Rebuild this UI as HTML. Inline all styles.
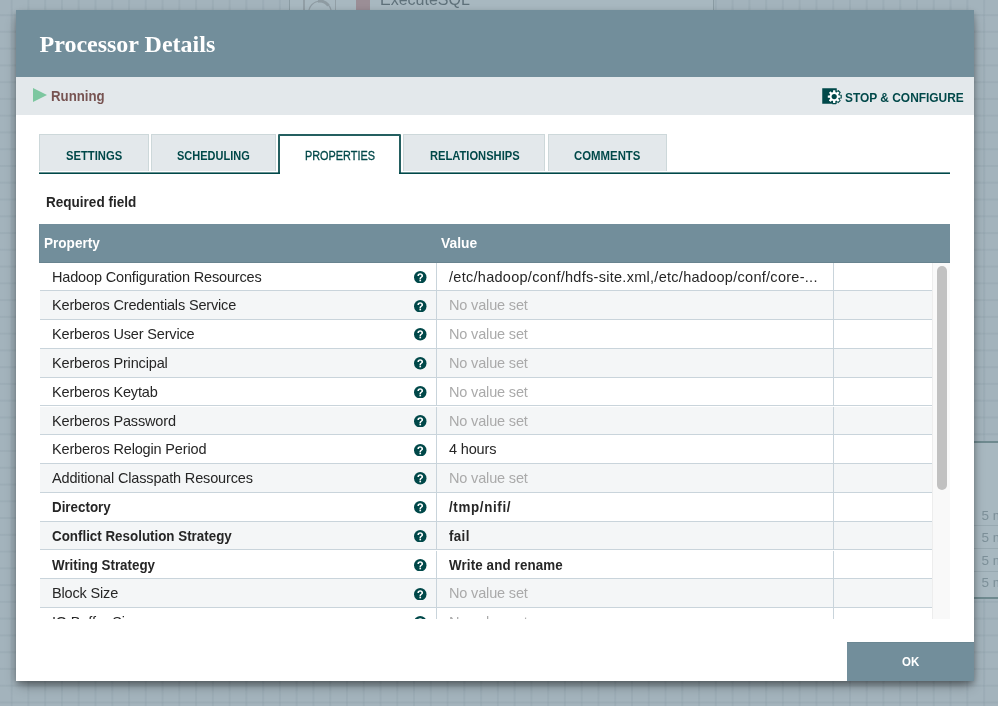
<!DOCTYPE html>
<html><head><meta charset="utf-8">
<style>
html,body{margin:0;padding:0;}
body{width:998px;height:706px;position:relative;overflow:hidden;background-color:#a3b3bc;font-family:"Liberation Sans",sans-serif;}
.t{position:absolute;white-space:nowrap;line-height:normal;}
#grid-bg{position:absolute;left:0;top:0;width:998px;height:706px;
background-image:linear-gradient(to right, rgba(125,145,155,0.17) 2px, transparent 2px),linear-gradient(to bottom, rgba(125,145,155,0.17) 2px, transparent 2px);
background-size:16.77px 16.78px;background-position:10.7px 14.1px;}
#dialog{position:absolute;left:16px;top:10px;width:958px;height:671px;background:#fff;box-shadow:0 6px 12px -3px rgba(0,0,0,0.45), 0 3px 6px rgba(0,0,0,0.24);}
.bar{position:absolute;}
.tab{position:absolute;top:134px;height:37px;background:#e3e8eb;border:1px solid #cdd8da;border-bottom:none;box-sizing:border-box;}
.tab.sel{background:#fff;border:2px solid #245f60;border-bottom:none;height:40px;border-radius:1.5px 1.5px 0 0;}
.row{position:absolute;left:39.5px;width:893px;height:28.8px;}
.row::after{content:"";position:absolute;left:0;right:0;bottom:0;height:1.2px;background:#c9d4db;}
.row::before{content:"";position:absolute;left:396.5px;top:0;bottom:0;width:1.2px;background:#c9d4db;box-shadow:397px 0 0 #c9d4db;}
.help{position:absolute;left:374.5px;width:12.5px;height:12.5px;}
.help svg{display:block;}
</style></head><body>
<div id="wrap" style="position:absolute;left:0;top:0;width:998px;height:706px;will-change:transform;">
<div id="grid-bg"></div>
<div class="bar" style="left:289px;top:0;width:423px;height:10px;background:#a8b8c0;border-left:1px solid #8a9ba3;border-right:1px solid #8a9ba3;"></div>
<div class="bar" style="left:302.5px;top:0;width:33px;height:10px;border-left:2px solid #929fa6;border-right:1px solid #929fa6;box-sizing:border-box;"></div>
<svg class="bar" style="left:300px;top:0" width="40" height="10" viewBox="300 0 40 10"><circle cx="320" cy="12.5" r="11.3" fill="none" stroke="#8e9ba2" stroke-width="1.1"/><path d="M318 1.2 A11.3 11.3 0 0 1 328.5 5.5" fill="none" stroke="#8e9ba2" stroke-width="3"/></svg>
<div class="bar" style="left:356px;top:0;width:14px;height:10px;background:#9b8e96;"></div>
<div class="t" style="left:380px;top:-8.9px;font-size:16px;color:#5f717a;">ExecuteSQL</div>
<div class="bar" style="left:974px;top:441px;width:24px;height:158px;background:#a8b8c0;border-top:2px solid #6f8a8f;border-bottom:2px solid #6f8a8f;box-sizing:border-box;"></div>
<div class="bar" style="left:974px;top:525px;width:24px;height:1px;background:#98a9b1;"></div>
<div class="bar" style="left:974px;top:548px;width:24px;height:1px;background:#98a9b1;"></div>
<div class="bar" style="left:974px;top:571px;width:24px;height:1px;background:#98a9b1;"></div>
<div class="t" style="left:981.5px;top:505px;font-size:13.5px;line-height:22.4px;color:#7d9099;">5 m<br>5 m<br>5 m<br>5 m</div>
<div id="dialog"></div>
<div class="bar" style="left:16px;top:10px;width:958px;height:67px;background:#728e9b;"></div>
<div class="bar" style="left:16px;top:77px;width:958px;height:38px;background:#e3e8eb;"></div>
<div class="t" id="title" style="left:39.5px;top:31.02px;font-family:'Liberation Serif',serif;font-size:24px;letter-spacing:0px;font-weight:bold;color:#fff;">Processor Details</div>
<div class="bar" style="left:33px;top:88px;width:0;height:0;border-top:7px solid transparent;border-bottom:7px solid transparent;border-left:14px solid #7dc7a0;"></div>
<div class="t" id="running" style="left:50.8px;top:87.83px;font-family:'Liberation Sans',sans-serif;font-size:14px;letter-spacing:0px;font-weight:bold;color:#775351;transform:scaleX(0.945);transform-origin:0 0;">Running</div>
<svg width="28" height="24" viewBox="0 0 28 24" style="position:absolute;left:818px;top:84px"><rect x="4.25" y="4.25" width="14.5" height="15.5" fill="#004849"/><g transform="translate(16.2,12.6)"><circle r="6.0" fill="#004849"/><rect x="-1.9" y="-7.6" width="3.8" height="2.5999999999999996" rx="0.3" fill="#004849" transform="rotate(0)"/><rect x="-1.9" y="-7.6" width="3.8" height="2.5999999999999996" rx="0.3" fill="#004849" transform="rotate(45)"/><rect x="-1.9" y="-7.6" width="3.8" height="2.5999999999999996" rx="0.3" fill="#004849" transform="rotate(90)"/><rect x="-1.9" y="-7.6" width="3.8" height="2.5999999999999996" rx="0.3" fill="#004849" transform="rotate(135)"/><rect x="-1.9" y="-7.6" width="3.8" height="2.5999999999999996" rx="0.3" fill="#004849" transform="rotate(180)"/><rect x="-1.9" y="-7.6" width="3.8" height="2.5999999999999996" rx="0.3" fill="#004849" transform="rotate(225)"/><rect x="-1.9" y="-7.6" width="3.8" height="2.5999999999999996" rx="0.3" fill="#004849" transform="rotate(270)"/><rect x="-1.9" y="-7.6" width="3.8" height="2.5999999999999996" rx="0.3" fill="#004849" transform="rotate(315)"/><circle r="4.6" fill="#fff"/><rect x="-1.15" y="-6.4" width="2.3" height="2.8000000000000007" rx="0.3" fill="#fff" transform="rotate(0)"/><rect x="-1.15" y="-6.4" width="2.3" height="2.8000000000000007" rx="0.3" fill="#fff" transform="rotate(45)"/><rect x="-1.15" y="-6.4" width="2.3" height="2.8000000000000007" rx="0.3" fill="#fff" transform="rotate(90)"/><rect x="-1.15" y="-6.4" width="2.3" height="2.8000000000000007" rx="0.3" fill="#fff" transform="rotate(135)"/><rect x="-1.15" y="-6.4" width="2.3" height="2.8000000000000007" rx="0.3" fill="#fff" transform="rotate(180)"/><rect x="-1.15" y="-6.4" width="2.3" height="2.8000000000000007" rx="0.3" fill="#fff" transform="rotate(225)"/><rect x="-1.15" y="-6.4" width="2.3" height="2.8000000000000007" rx="0.3" fill="#fff" transform="rotate(270)"/><rect x="-1.15" y="-6.4" width="2.3" height="2.8000000000000007" rx="0.3" fill="#fff" transform="rotate(315)"/><circle r="2.6" fill="#004849"/></g></svg>
<div class="t" id="stop" style="left:845px;top:89.83px;font-family:'Liberation Sans',sans-serif;font-size:13px;letter-spacing:0px;font-weight:bold;color:#004849;transform:scaleX(0.917);transform-origin:0 0;">STOP &amp; CONFIGURE</div>
<div class="tab" style="left:39px;width:110px"></div>
<div class="t" id="" style="left:65.5px;top:148.87px;font-family:'Liberation Sans',sans-serif;font-size:12.3px;letter-spacing:0px;font-weight:bold;color:#004849;transform:scaleX(0.913);transform-origin:0 0;">SETTINGS</div>
<div class="tab" style="left:151px;width:125px"></div>
<div class="t" id="" style="left:177px;top:148.87px;font-family:'Liberation Sans',sans-serif;font-size:12.3px;letter-spacing:0px;font-weight:bold;color:#004849;transform:scaleX(0.894);transform-origin:0 0;">SCHEDULING</div>
<div class="tab sel" style="left:278px;width:123px"></div>
<div class="t" id="" style="left:304.5px;top:148.87px;font-family:'Liberation Sans',sans-serif;font-size:12.3px;letter-spacing:0px;font-weight:normal;color:#004849;transform:scaleX(0.885);transform-origin:0 0;-webkit-text-stroke:0.3px #004849;">PROPERTIES</div>
<div class="tab" style="left:403px;width:142px"></div>
<div class="t" id="" style="left:429.5px;top:148.87px;font-family:'Liberation Sans',sans-serif;font-size:12.3px;letter-spacing:0px;font-weight:bold;color:#004849;transform:scaleX(0.907);transform-origin:0 0;">RELATIONSHIPS</div>
<div class="tab" style="left:548px;width:119px"></div>
<div class="t" id="" style="left:574px;top:148.87px;font-family:'Liberation Sans',sans-serif;font-size:12.3px;letter-spacing:0px;font-weight:bold;color:#004849;transform:scaleX(0.926);transform-origin:0 0;">COMMENTS</div>
<div class="bar" style="left:39px;top:172px;width:241px;height:1px;background:rgba(0,72,73,0.6);"></div>
<div class="bar" style="left:39px;top:173px;width:241px;height:1px;background:#004849;"></div>
<div class="bar" style="left:399px;top:172px;width:551px;height:1px;background:rgba(0,72,73,0.6);"></div>
<div class="bar" style="left:399px;top:173px;width:551px;height:1px;background:#004849;"></div>
<div class="t" id="req" style="left:45.8px;top:194.13px;font-family:'Liberation Sans',sans-serif;font-size:14px;letter-spacing:0px;font-weight:bold;color:#262626;transform:scaleX(0.967);transform-origin:0 0;">Required field</div>
<div class="bar" style="left:39px;top:224px;width:911px;height:38.5px;background:#728e9b;box-shadow:inset 0 -1px 0 #68838f, inset 1px 0 0 #6b8793;"></div>
<div class="t" id="property" style="left:43.8px;top:235.07px;font-family:'Liberation Sans',sans-serif;font-size:14.4px;letter-spacing:0px;font-weight:bold;color:#fff;transform:scaleX(0.943);transform-origin:0 0;">Property</div>
<div class="t" id="value" style="left:440.5px;top:235.07px;font-family:'Liberation Sans',sans-serif;font-size:14.4px;letter-spacing:0px;font-weight:bold;color:#fff;transform:scaleX(0.96);transform-origin:0 0;">Value</div>
<div class="bar" style="left:0;top:262.5px;width:998px;height:356.5px;overflow:hidden;">
<div style="position:absolute;left:0;top:-262.5px;width:998px;height:706px;">
<div class="row" style="top:262.50px;background:#ffffff"><div class="t" style="left:12.5px;top:6.18px;font-size:14.5px;letter-spacing:-0.16px;font-weight:normal;color:#262626;">Hadoop Configuration Resources</div><div class="help" style="top:8.3px"><svg viewBox="0 0 100 100" width="100%" height="100%"><circle cx="50" cy="50" r="50" fill="#004849"/><path d="M50 18 C35 18 27 27 27 39 L27 40 L40 40 L40 39 C40 33 44 29.5 50 29.5 C56 29.5 59.5 33 59.5 38 C59.5 43 56 45 52 48 C46.5 52 44 55 44 62 L44 65 L56 65 L56 62.5 C56 58 58.5 56 62 53.5 C68 49 72.5 45 72.5 37.5 C72.5 26 63 18 50 18 Z" fill="#fff"/><rect x="43.5" y="70" width="13" height="12.5" fill="#fff"/></svg></div><div class="t" style="left:409.5px;top:6.18px;font-size:14.5px;letter-spacing:0.28px;font-weight:normal;color:#262626;">/etc/hadoop/conf/hdfs-site.xml,/etc/hadoop/conf/core-...</div></div>
<div class="row" style="top:291.30px;background:#f4f6f7"><div class="t" style="left:12.5px;top:6.18px;font-size:14.5px;letter-spacing:-0.16px;font-weight:normal;color:#262626;">Kerberos Credentials Service</div><div class="help" style="top:8.3px"><svg viewBox="0 0 100 100" width="100%" height="100%"><circle cx="50" cy="50" r="50" fill="#004849"/><path d="M50 18 C35 18 27 27 27 39 L27 40 L40 40 L40 39 C40 33 44 29.5 50 29.5 C56 29.5 59.5 33 59.5 38 C59.5 43 56 45 52 48 C46.5 52 44 55 44 62 L44 65 L56 65 L56 62.5 C56 58 58.5 56 62 53.5 C68 49 72.5 45 72.5 37.5 C72.5 26 63 18 50 18 Z" fill="#fff"/><rect x="43.5" y="70" width="13" height="12.5" fill="#fff"/></svg></div><div class="t" style="left:409.5px;top:6.18px;font-size:14.5px;letter-spacing:-0.16px;font-weight:normal;color:#aaaaaa;">No value set</div></div>
<div class="row" style="top:320.10px;background:#ffffff"><div class="t" style="left:12.5px;top:6.18px;font-size:14.5px;letter-spacing:-0.16px;font-weight:normal;color:#262626;">Kerberos User Service</div><div class="help" style="top:8.3px"><svg viewBox="0 0 100 100" width="100%" height="100%"><circle cx="50" cy="50" r="50" fill="#004849"/><path d="M50 18 C35 18 27 27 27 39 L27 40 L40 40 L40 39 C40 33 44 29.5 50 29.5 C56 29.5 59.5 33 59.5 38 C59.5 43 56 45 52 48 C46.5 52 44 55 44 62 L44 65 L56 65 L56 62.5 C56 58 58.5 56 62 53.5 C68 49 72.5 45 72.5 37.5 C72.5 26 63 18 50 18 Z" fill="#fff"/><rect x="43.5" y="70" width="13" height="12.5" fill="#fff"/></svg></div><div class="t" style="left:409.5px;top:6.18px;font-size:14.5px;letter-spacing:-0.16px;font-weight:normal;color:#aaaaaa;">No value set</div></div>
<div class="row" style="top:348.90px;background:#f4f6f7"><div class="t" style="left:12.5px;top:6.18px;font-size:14.5px;letter-spacing:-0.16px;font-weight:normal;color:#262626;">Kerberos Principal</div><div class="help" style="top:8.3px"><svg viewBox="0 0 100 100" width="100%" height="100%"><circle cx="50" cy="50" r="50" fill="#004849"/><path d="M50 18 C35 18 27 27 27 39 L27 40 L40 40 L40 39 C40 33 44 29.5 50 29.5 C56 29.5 59.5 33 59.5 38 C59.5 43 56 45 52 48 C46.5 52 44 55 44 62 L44 65 L56 65 L56 62.5 C56 58 58.5 56 62 53.5 C68 49 72.5 45 72.5 37.5 C72.5 26 63 18 50 18 Z" fill="#fff"/><rect x="43.5" y="70" width="13" height="12.5" fill="#fff"/></svg></div><div class="t" style="left:409.5px;top:6.18px;font-size:14.5px;letter-spacing:-0.16px;font-weight:normal;color:#aaaaaa;">No value set</div></div>
<div class="row" style="top:377.70px;background:#ffffff"><div class="t" style="left:12.5px;top:6.18px;font-size:14.5px;letter-spacing:-0.16px;font-weight:normal;color:#262626;">Kerberos Keytab</div><div class="help" style="top:8.3px"><svg viewBox="0 0 100 100" width="100%" height="100%"><circle cx="50" cy="50" r="50" fill="#004849"/><path d="M50 18 C35 18 27 27 27 39 L27 40 L40 40 L40 39 C40 33 44 29.5 50 29.5 C56 29.5 59.5 33 59.5 38 C59.5 43 56 45 52 48 C46.5 52 44 55 44 62 L44 65 L56 65 L56 62.5 C56 58 58.5 56 62 53.5 C68 49 72.5 45 72.5 37.5 C72.5 26 63 18 50 18 Z" fill="#fff"/><rect x="43.5" y="70" width="13" height="12.5" fill="#fff"/></svg></div><div class="t" style="left:409.5px;top:6.18px;font-size:14.5px;letter-spacing:-0.16px;font-weight:normal;color:#aaaaaa;">No value set</div></div>
<div class="row" style="top:406.50px;background:#f4f6f7"><div class="t" style="left:12.5px;top:6.18px;font-size:14.5px;letter-spacing:-0.16px;font-weight:normal;color:#262626;">Kerberos Password</div><div class="help" style="top:8.3px"><svg viewBox="0 0 100 100" width="100%" height="100%"><circle cx="50" cy="50" r="50" fill="#004849"/><path d="M50 18 C35 18 27 27 27 39 L27 40 L40 40 L40 39 C40 33 44 29.5 50 29.5 C56 29.5 59.5 33 59.5 38 C59.5 43 56 45 52 48 C46.5 52 44 55 44 62 L44 65 L56 65 L56 62.5 C56 58 58.5 56 62 53.5 C68 49 72.5 45 72.5 37.5 C72.5 26 63 18 50 18 Z" fill="#fff"/><rect x="43.5" y="70" width="13" height="12.5" fill="#fff"/></svg></div><div class="t" style="left:409.5px;top:6.18px;font-size:14.5px;letter-spacing:-0.16px;font-weight:normal;color:#aaaaaa;">No value set</div></div>
<div class="row" style="top:435.30px;background:#ffffff"><div class="t" style="left:12.5px;top:6.18px;font-size:14.5px;letter-spacing:-0.16px;font-weight:normal;color:#262626;">Kerberos Relogin Period</div><div class="help" style="top:8.3px"><svg viewBox="0 0 100 100" width="100%" height="100%"><circle cx="50" cy="50" r="50" fill="#004849"/><path d="M50 18 C35 18 27 27 27 39 L27 40 L40 40 L40 39 C40 33 44 29.5 50 29.5 C56 29.5 59.5 33 59.5 38 C59.5 43 56 45 52 48 C46.5 52 44 55 44 62 L44 65 L56 65 L56 62.5 C56 58 58.5 56 62 53.5 C68 49 72.5 45 72.5 37.5 C72.5 26 63 18 50 18 Z" fill="#fff"/><rect x="43.5" y="70" width="13" height="12.5" fill="#fff"/></svg></div><div class="t" style="left:409.5px;top:6.18px;font-size:14.5px;letter-spacing:-0.16px;font-weight:normal;color:#262626;">4 hours</div></div>
<div class="row" style="top:464.10px;background:#f4f6f7"><div class="t" style="left:12.5px;top:6.18px;font-size:14.5px;letter-spacing:-0.16px;font-weight:normal;color:#262626;">Additional Classpath Resources</div><div class="help" style="top:8.3px"><svg viewBox="0 0 100 100" width="100%" height="100%"><circle cx="50" cy="50" r="50" fill="#004849"/><path d="M50 18 C35 18 27 27 27 39 L27 40 L40 40 L40 39 C40 33 44 29.5 50 29.5 C56 29.5 59.5 33 59.5 38 C59.5 43 56 45 52 48 C46.5 52 44 55 44 62 L44 65 L56 65 L56 62.5 C56 58 58.5 56 62 53.5 C68 49 72.5 45 72.5 37.5 C72.5 26 63 18 50 18 Z" fill="#fff"/><rect x="43.5" y="70" width="13" height="12.5" fill="#fff"/></svg></div><div class="t" style="left:409.5px;top:6.18px;font-size:14.5px;letter-spacing:-0.16px;font-weight:normal;color:#aaaaaa;">No value set</div></div>
<div class="row" style="top:492.90px;background:#ffffff"><div class="t" style="left:12.5px;top:6.18px;font-size:14.5px;letter-spacing:0px;font-weight:bold;color:#262626;transform:scaleX(0.922);transform-origin:0 0;">Directory</div><div class="help" style="top:8.3px"><svg viewBox="0 0 100 100" width="100%" height="100%"><circle cx="50" cy="50" r="50" fill="#004849"/><path d="M50 18 C35 18 27 27 27 39 L27 40 L40 40 L40 39 C40 33 44 29.5 50 29.5 C56 29.5 59.5 33 59.5 38 C59.5 43 56 45 52 48 C46.5 52 44 55 44 62 L44 65 L56 65 L56 62.5 C56 58 58.5 56 62 53.5 C68 49 72.5 45 72.5 37.5 C72.5 26 63 18 50 18 Z" fill="#fff"/><rect x="43.5" y="70" width="13" height="12.5" fill="#fff"/></svg></div><div class="t" style="left:409.5px;top:6.18px;font-size:14.5px;letter-spacing:0.7px;font-weight:bold;color:#262626;transform:scaleX(0.922);transform-origin:0 0;">/tmp/nifi/</div></div>
<div class="row" style="top:521.70px;background:#f4f6f7"><div class="t" style="left:12.5px;top:6.18px;font-size:14.5px;letter-spacing:0px;font-weight:bold;color:#262626;transform:scaleX(0.922);transform-origin:0 0;">Conflict Resolution Strategy</div><div class="help" style="top:8.3px"><svg viewBox="0 0 100 100" width="100%" height="100%"><circle cx="50" cy="50" r="50" fill="#004849"/><path d="M50 18 C35 18 27 27 27 39 L27 40 L40 40 L40 39 C40 33 44 29.5 50 29.5 C56 29.5 59.5 33 59.5 38 C59.5 43 56 45 52 48 C46.5 52 44 55 44 62 L44 65 L56 65 L56 62.5 C56 58 58.5 56 62 53.5 C68 49 72.5 45 72.5 37.5 C72.5 26 63 18 50 18 Z" fill="#fff"/><rect x="43.5" y="70" width="13" height="12.5" fill="#fff"/></svg></div><div class="t" style="left:409.5px;top:6.18px;font-size:14.5px;letter-spacing:0.4px;font-weight:bold;color:#262626;transform:scaleX(0.922);transform-origin:0 0;">fail</div></div>
<div class="row" style="top:550.50px;background:#ffffff"><div class="t" style="left:12.5px;top:6.18px;font-size:14.5px;letter-spacing:0px;font-weight:bold;color:#262626;transform:scaleX(0.922);transform-origin:0 0;">Writing Strategy</div><div class="help" style="top:8.3px"><svg viewBox="0 0 100 100" width="100%" height="100%"><circle cx="50" cy="50" r="50" fill="#004849"/><path d="M50 18 C35 18 27 27 27 39 L27 40 L40 40 L40 39 C40 33 44 29.5 50 29.5 C56 29.5 59.5 33 59.5 38 C59.5 43 56 45 52 48 C46.5 52 44 55 44 62 L44 65 L56 65 L56 62.5 C56 58 58.5 56 62 53.5 C68 49 72.5 45 72.5 37.5 C72.5 26 63 18 50 18 Z" fill="#fff"/><rect x="43.5" y="70" width="13" height="12.5" fill="#fff"/></svg></div><div class="t" style="left:409.5px;top:6.18px;font-size:14.5px;letter-spacing:0.13px;font-weight:bold;color:#262626;transform:scaleX(0.922);transform-origin:0 0;">Write and rename</div></div>
<div class="row" style="top:579.30px;background:#f4f6f7"><div class="t" style="left:12.5px;top:6.18px;font-size:14.5px;letter-spacing:-0.16px;font-weight:normal;color:#262626;">Block Size</div><div class="help" style="top:8.3px"><svg viewBox="0 0 100 100" width="100%" height="100%"><circle cx="50" cy="50" r="50" fill="#004849"/><path d="M50 18 C35 18 27 27 27 39 L27 40 L40 40 L40 39 C40 33 44 29.5 50 29.5 C56 29.5 59.5 33 59.5 38 C59.5 43 56 45 52 48 C46.5 52 44 55 44 62 L44 65 L56 65 L56 62.5 C56 58 58.5 56 62 53.5 C68 49 72.5 45 72.5 37.5 C72.5 26 63 18 50 18 Z" fill="#fff"/><rect x="43.5" y="70" width="13" height="12.5" fill="#fff"/></svg></div><div class="t" style="left:409.5px;top:6.18px;font-size:14.5px;letter-spacing:-0.16px;font-weight:normal;color:#aaaaaa;">No value set</div></div>
<div class="row" style="top:608.10px;background:#ffffff"><div class="t" style="left:12.5px;top:6.18px;font-size:14.5px;letter-spacing:-0.16px;font-weight:normal;color:#262626;">IO Buffer Size</div><div class="help" style="top:8.3px"><svg viewBox="0 0 100 100" width="100%" height="100%"><circle cx="50" cy="50" r="50" fill="#004849"/><path d="M50 18 C35 18 27 27 27 39 L27 40 L40 40 L40 39 C40 33 44 29.5 50 29.5 C56 29.5 59.5 33 59.5 38 C59.5 43 56 45 52 48 C46.5 52 44 55 44 62 L44 65 L56 65 L56 62.5 C56 58 58.5 56 62 53.5 C68 49 72.5 45 72.5 37.5 C72.5 26 63 18 50 18 Z" fill="#fff"/><rect x="43.5" y="70" width="13" height="12.5" fill="#fff"/></svg></div><div class="t" style="left:409.5px;top:6.18px;font-size:14.5px;letter-spacing:-0.16px;font-weight:normal;color:#aaaaaa;">No value set</div></div>
</div></div>
<div class="bar" style="left:932px;top:262.5px;width:18px;height:356.5px;background:#f9f9f9;border-left:1px solid #ededed;box-sizing:border-box;"></div>
<div class="bar" style="left:937px;top:266px;width:9.5px;height:223.5px;background:#c1c1c1;border-radius:5px;"></div>
<div class="bar" style="left:847px;top:642px;width:127px;height:39px;background:#728e9b;border-top:1px solid #6b8793;box-sizing:border-box;"></div>
<div class="t" id="ok" style="left:901.5px;top:654.69px;font-family:'Liberation Sans',sans-serif;font-size:12.5px;letter-spacing:0px;font-weight:bold;color:#fff;transform:scaleX(0.92);transform-origin:0 0;">OK</div>
</div>
</body></html>
